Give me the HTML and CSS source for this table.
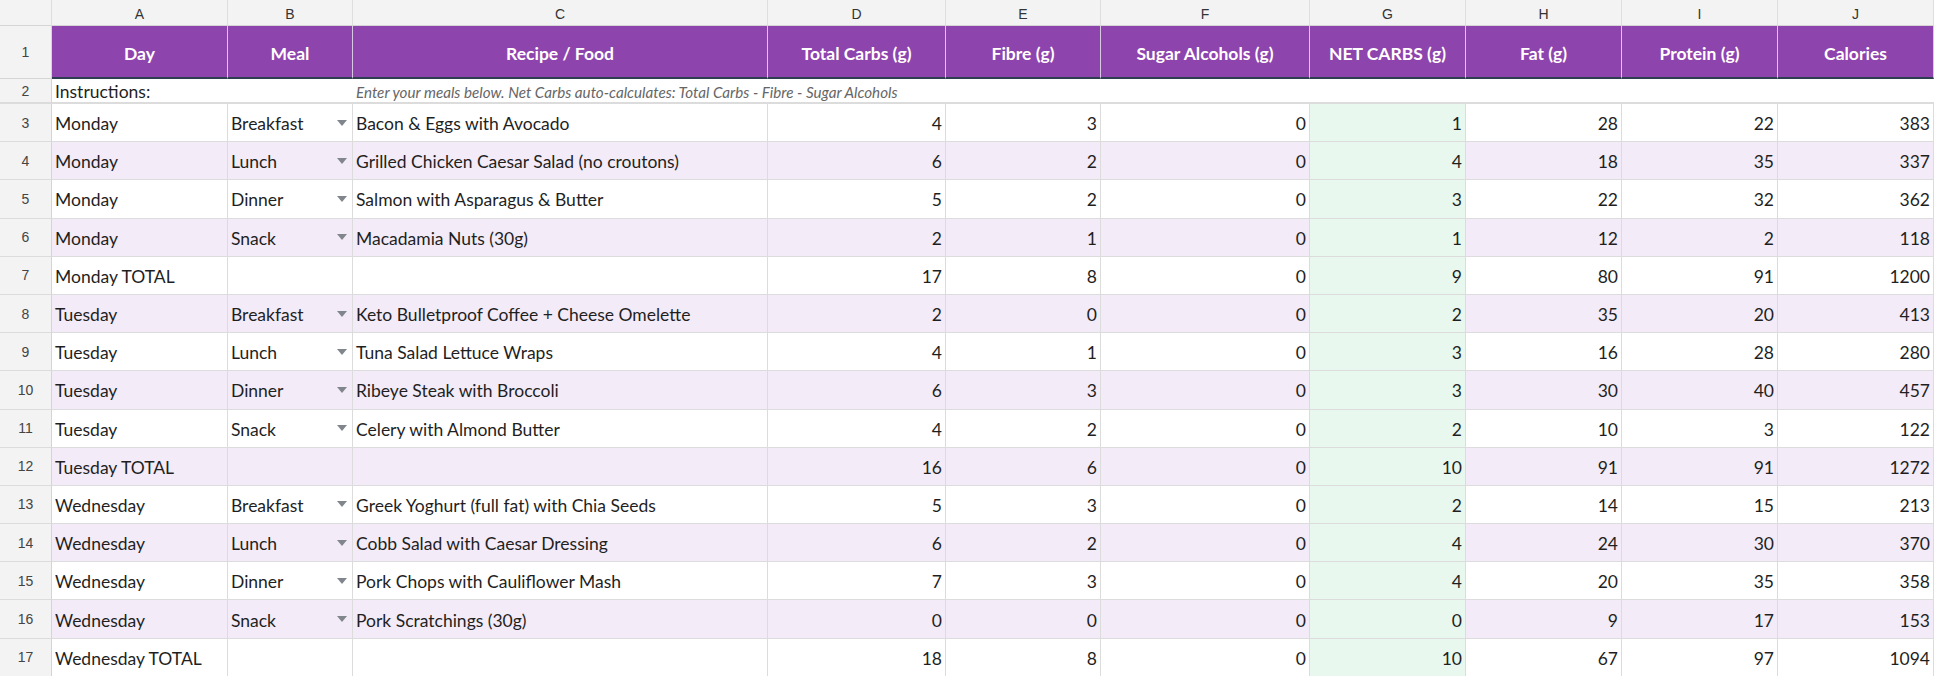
FILE: index.html
```html
<!DOCTYPE html>
<html>
<head>
<meta charset="utf-8">
<title>Keto Meal Tracker</title>
<link rel="stylesheet" href="styles.css">
</head>
<body>
<div class="sheet">
  <div class="row colhead">
    <div class="c rn"></div>
    <div class="c">A</div><div class="c">B</div><div class="c">C</div><div class="c">D</div><div class="c">E</div>
    <div class="c">F</div><div class="c">G</div><div class="c">H</div><div class="c">I</div><div class="c">J</div>
  </div>
  <div class="row head">
    <div class="c rn">1</div>
    <div class="c">Day</div><div class="c">Meal</div><div class="c">Recipe / Food</div><div class="c">Total Carbs (g)</div>
    <div class="c">Fibre (g)</div><div class="c">Sugar Alcohols (g)</div><div class="c">NET CARBS (g)</div>
    <div class="c">Fat (g)</div><div class="c">Protein (g)</div><div class="c">Calories</div>
  </div>
  <div class="row instr">
    <div class="c rn">2</div>
    <div class="c label">Instructions:</div>
    <div class="c note">Enter your meals below. Net Carbs auto-calculates: Total Carbs - Fibre - Sugar Alcohols</div>
  </div>

  <div class="row data">
    <div class="c rn">3</div><div class="c t">Monday</div><div class="c t meal">Breakfast<span class="dd"></span></div><div class="c t">Bacon &amp; Eggs with Avocado</div>
    <div class="c n">4</div><div class="c n">3</div><div class="c n">0</div><div class="c n net">1</div><div class="c n">28</div><div class="c n">22</div><div class="c n">383</div>
  </div>
  <div class="row data alt">
    <div class="c rn">4</div><div class="c t">Monday</div><div class="c t meal">Lunch<span class="dd"></span></div><div class="c t">Grilled Chicken Caesar Salad (no croutons)</div>
    <div class="c n">6</div><div class="c n">2</div><div class="c n">0</div><div class="c n net">4</div><div class="c n">18</div><div class="c n">35</div><div class="c n">337</div>
  </div>
  <div class="row data">
    <div class="c rn">5</div><div class="c t">Monday</div><div class="c t meal">Dinner<span class="dd"></span></div><div class="c t">Salmon with Asparagus &amp; Butter</div>
    <div class="c n">5</div><div class="c n">2</div><div class="c n">0</div><div class="c n net">3</div><div class="c n">22</div><div class="c n">32</div><div class="c n">362</div>
  </div>
  <div class="row data alt">
    <div class="c rn">6</div><div class="c t">Monday</div><div class="c t meal">Snack<span class="dd"></span></div><div class="c t">Macadamia Nuts (30g)</div>
    <div class="c n">2</div><div class="c n">1</div><div class="c n">0</div><div class="c n net">1</div><div class="c n">12</div><div class="c n">2</div><div class="c n">118</div>
  </div>
  <div class="row data">
    <div class="c rn">7</div><div class="c t">Monday TOTAL</div><div class="c t"></div><div class="c t"></div>
    <div class="c n">17</div><div class="c n">8</div><div class="c n">0</div><div class="c n net">9</div><div class="c n">80</div><div class="c n">91</div><div class="c n">1200</div>
  </div>
  <div class="row data alt">
    <div class="c rn">8</div><div class="c t">Tuesday</div><div class="c t meal">Breakfast<span class="dd"></span></div><div class="c t">Keto Bulletproof Coffee + Cheese Omelette</div>
    <div class="c n">2</div><div class="c n">0</div><div class="c n">0</div><div class="c n net">2</div><div class="c n">35</div><div class="c n">20</div><div class="c n">413</div>
  </div>
  <div class="row data">
    <div class="c rn">9</div><div class="c t">Tuesday</div><div class="c t meal">Lunch<span class="dd"></span></div><div class="c t">Tuna Salad Lettuce Wraps</div>
    <div class="c n">4</div><div class="c n">1</div><div class="c n">0</div><div class="c n net">3</div><div class="c n">16</div><div class="c n">28</div><div class="c n">280</div>
  </div>
  <div class="row data alt">
    <div class="c rn">10</div><div class="c t">Tuesday</div><div class="c t meal">Dinner<span class="dd"></span></div><div class="c t">Ribeye Steak with Broccoli</div>
    <div class="c n">6</div><div class="c n">3</div><div class="c n">0</div><div class="c n net">3</div><div class="c n">30</div><div class="c n">40</div><div class="c n">457</div>
  </div>
  <div class="row data">
    <div class="c rn">11</div><div class="c t">Tuesday</div><div class="c t meal">Snack<span class="dd"></span></div><div class="c t">Celery with Almond Butter</div>
    <div class="c n">4</div><div class="c n">2</div><div class="c n">0</div><div class="c n net">2</div><div class="c n">10</div><div class="c n">3</div><div class="c n">122</div>
  </div>
  <div class="row data alt">
    <div class="c rn">12</div><div class="c t">Tuesday TOTAL</div><div class="c t"></div><div class="c t"></div>
    <div class="c n">16</div><div class="c n">6</div><div class="c n">0</div><div class="c n net">10</div><div class="c n">91</div><div class="c n">91</div><div class="c n">1272</div>
  </div>
  <div class="row data">
    <div class="c rn">13</div><div class="c t">Wednesday</div><div class="c t meal">Breakfast<span class="dd"></span></div><div class="c t">Greek Yoghurt (full fat) with Chia Seeds</div>
    <div class="c n">5</div><div class="c n">3</div><div class="c n">0</div><div class="c n net">2</div><div class="c n">14</div><div class="c n">15</div><div class="c n">213</div>
  </div>
  <div class="row data alt">
    <div class="c rn">14</div><div class="c t">Wednesday</div><div class="c t meal">Lunch<span class="dd"></span></div><div class="c t">Cobb Salad with Caesar Dressing</div>
    <div class="c n">6</div><div class="c n">2</div><div class="c n">0</div><div class="c n net">4</div><div class="c n">24</div><div class="c n">30</div><div class="c n">370</div>
  </div>
  <div class="row data">
    <div class="c rn">15</div><div class="c t">Wednesday</div><div class="c t meal">Dinner<span class="dd"></span></div><div class="c t">Pork Chops with Cauliflower Mash</div>
    <div class="c n">7</div><div class="c n">3</div><div class="c n">0</div><div class="c n net">4</div><div class="c n">20</div><div class="c n">35</div><div class="c n">358</div>
  </div>
  <div class="row data alt">
    <div class="c rn">16</div><div class="c t">Wednesday</div><div class="c t meal">Snack<span class="dd"></span></div><div class="c t">Pork Scratchings (30g)</div>
    <div class="c n">0</div><div class="c n">0</div><div class="c n">0</div><div class="c n net">0</div><div class="c n">9</div><div class="c n">17</div><div class="c n">153</div>
  </div>
  <div class="row data">
    <div class="c rn">17</div><div class="c t">Wednesday TOTAL</div><div class="c t"></div><div class="c t"></div>
    <div class="c n">18</div><div class="c n">8</div><div class="c n">0</div><div class="c n net">10</div><div class="c n">67</div><div class="c n">97</div><div class="c n">1094</div>
  </div>
</div>
</body>
</html>
```
FILE: styles.css
```css
* { box-sizing: border-box; }
html, body { margin: 0; padding: 0; background: #ffffff; }
body { width: 1934px; height: 676px; overflow: hidden; font-family: "Lato", "Liberation Sans", sans-serif; color: #1f1f1f; }

.sheet { width: 1934px; }

.row {
  display: grid;
  grid-template-columns: 52px 176px 125px 415px 178px 155px 209px 156px 156px 156px 156px;
}

.c {
  display: flex;
  align-items: center;
  border-right: 1px solid #dcdcdc;
  border-bottom: 1px solid #dcdcdc;
  padding: 0 3px;
  white-space: nowrap;
  overflow: hidden;
  min-width: 0;
}

.rn {
  justify-content: center;
  background: #f3f3f3;
  font-family: "Liberation Sans", Arial, sans-serif;
  font-size: 14px;
  color: #444;
  border-right: 1px solid #d4d4d4;
}

/* column letter header */
.colhead { height: 26px; }
.colhead .c {
  justify-content: center;
  background: #f3f3f3;
  font-family: "Liberation Sans", Arial, sans-serif;
  font-size: 14px;
  color: #333;
  border-right: 1px solid #dedede;
  border-bottom: 1px solid #d4d4d4;
  padding-top: 2px;
}

/* header row */
.head { height: 53px; }
.head .c {
  justify-content: center;
  background: #8e44ad;
  color: #ffffff;
  font-weight: 700;
  font-size: 17.5px;
  border-right: 1px solid #d9c8e2;
  border-bottom: 2px solid #2c3e50;
  padding-top: 3px;
}
.head .rn {
  background: #f3f3f3;
  color: #444;
  font-weight: 400;
  font-size: 14px;
  border-right: 1px solid #d4d4d4;
  border-bottom: 1px solid #d4d4d4;
  padding-top: 0;
}

/* instructions row */
.instr { height: 25px; }
.instr .c { border-bottom: 2px solid #dcdcdc; border-right: none; align-items: flex-end; padding-bottom: 0; }
.instr .rn { border-right: 1px solid #d4d4d4; align-items: center; padding-bottom: 0; }
.instr .label { grid-column: 2 / span 2; font-size: 17.5px; }
.instr .note { grid-column: 4 / span 8; font-style: italic; font-size: 15.2px; color: #666; padding-bottom: 1px; }

/* data rows */
.data { height: 38.2px; }
.data .c { font-size: 17.5px; padding-top: 2px; }
.data .rn { font-size: 14px; color: #444; padding-top: 0; }
.data .n { justify-content: flex-end; }
.data.alt .c { background: #f3ebf7; }
.data.alt .rn { background: #f3f3f3; }
.data .net, .data.alt .net { background: #e8f8ef; }

.meal { justify-content: space-between; }
.dd {
  width: 0;
  height: 0;
  border-left: 5px solid transparent;
  border-right: 5px solid transparent;
  border-top: 6px solid #80868b;
  margin-right: 2px;
  margin-top: -2px;
}
```
